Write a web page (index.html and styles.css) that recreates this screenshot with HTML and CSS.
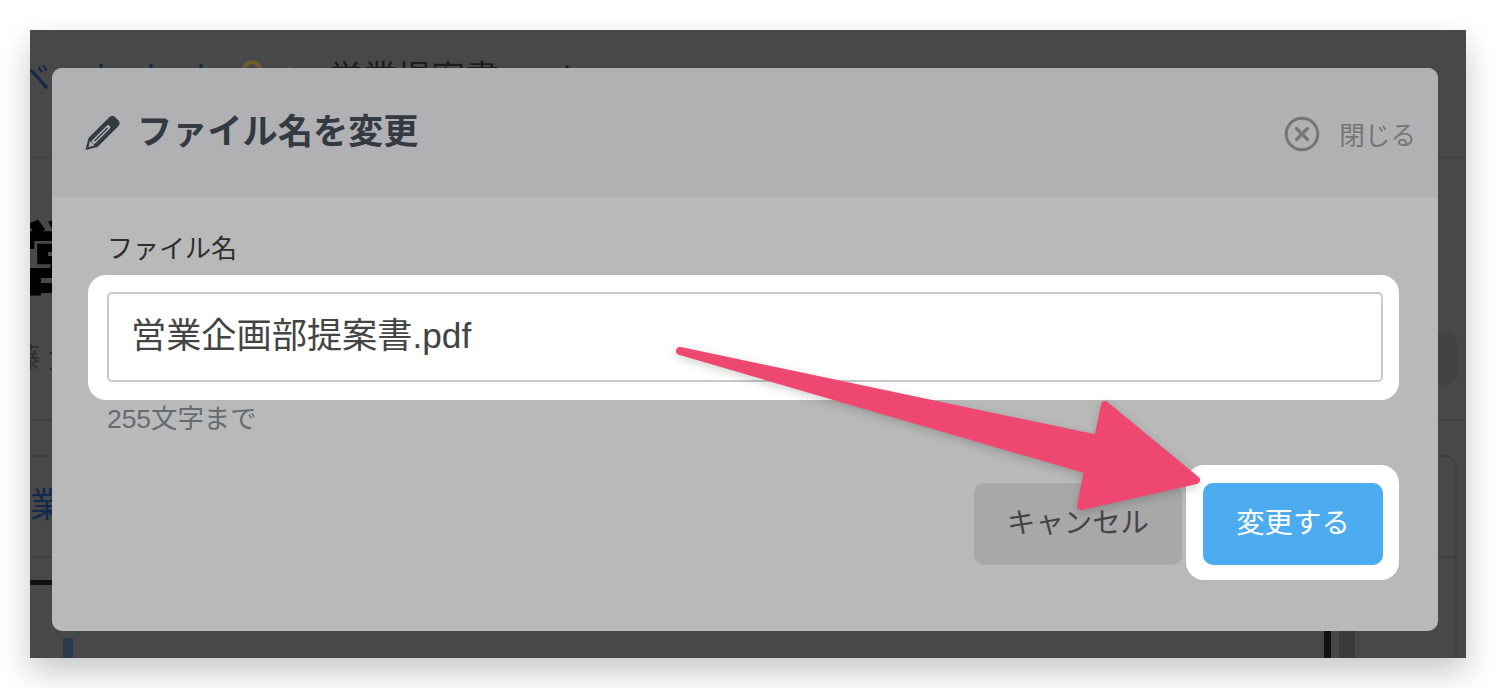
FILE: index.html
```html
<!DOCTYPE html>
<html lang="ja">
<head>
  <meta charset="UTF-8" />
  <meta name="viewport" content="width=device-width, initial-scale=1.0" />
  <title>ファイル名を変更</title>
  <link rel="stylesheet" href="styles.css">
</head>
<body>
  <div class="window">
    <!-- dimmed page behind the modal -->
    <div class="page">
      <div class="crumbs">
        <span class="crumb-link first">ベ</span>
        <span class="crumb-link">ト</span>
        <span class="crumb-link">ト</span>
        <span class="crumb-link">ト</span>
        <svg class="key" width="24" height="24" viewBox="0 0 24 24"><circle cx="12" cy="12" r="8" fill="none" stroke="#6f5d2c" stroke-width="4"/></svg>
        <svg class="chev" width="20" height="24" viewBox="0 0 20 24"><path d="M3 2l14 12" fill="none" stroke="#6b6b6b" stroke-width="3"/></svg>
        <span class="crumb-file">営業提案書</span>
        <span class="crumb-mark">〆</span>
      </div>
      <h1 class="page-title">営</h1>
      <div class="meta-row">
        <span class="meta-text">藤 大</span>
        <div class="meta-btn"></div>
      </div>
      <div class="card">
        <div class="card-head">業</div>
        <div class="card-body">
          <div class="thick-bar"></div>
          <div class="columns">
            <div class="blue-block"></div>
            <div class="black-line"></div>
            <div class="gray-block"></div>
          </div>
        </div>
      </div>
    </div>

    <div class="modal">
      <div class="modal-head">
        <h2 class="modal-title">
          <svg class="pencil" width="38" height="38" viewBox="0 0 38 38">
            <path d="M1.5 37l3-12L25 4.500q3-3 6-.5l3.500 3.500q2.500 3-.5 6L13.500 34z" fill="#343a42"/>
            <path d="M10 28.500L24 14.500" stroke="#b1b1b3" stroke-width="4.500" stroke-linecap="round"/>
            <path d="M10.500 28L23.500 15" stroke="#343a42" stroke-width="1.500"/>
            <path d="M4.500 34l1.500-6 4.500 4.500z" fill="#b1b1b3"/>
          </svg>
          ファイル名を変更
        </h2>
        <div class="close">
          <svg width="36" height="36" viewBox="0 0 36 36">
            <circle cx="18" cy="18" r="15.800" fill="none" stroke="#757575" stroke-width="3"/>
            <path d="M12.500 12.500l11 11M23.500 12.500l-11 11" stroke="#757575" stroke-width="3.200" stroke-linecap="round"/>
          </svg>
          <span>閉じる</span>
        </div>
      </div>
      <div class="modal-body">
        <label class="field-label">ファイル名</label>
        <div class="spot spot-input">
          <div class="text-input">営業企画部提案書.pdf</div>
        </div>
        <p class="hint">255文字まで</p>
        <div class="actions">
          <button class="btn btn-cancel">キャンセル</button>
          <div class="spot spot-btn">
            <button class="btn btn-primary">変更する</button>
          </div>
        </div>
      </div>
    </div>

    <!-- annotation arrow drawn on top of the screenshot -->
    <svg class="arrow" width="1436" height="628" viewBox="30 30 1436 628">
      <path d="M680 351L1098 439L1105 405L1196 480L1081 506L1088 470Z" fill="#ee4770" stroke="#ee4770" stroke-width="8" stroke-linejoin="round"/>
    </svg>
  </div>
</body>
</html>
```

FILE: styles.css
```css
* {
  box-sizing: border-box;
}
body {
  margin: 0;
  height: 688px;
  overflow: hidden;
  padding: 30px;
  background: #fff;
  font-family: "Liberation Sans", "Noto Sans CJK JP", sans-serif;
}
.window {
  position: relative;
  height: 628px;
  overflow: hidden;
  background: #484848;
  box-shadow: 0 14px 30px rgba(0, 0, 0, 0.22);
}

/* page behind the modal */
.crumbs {
  display: flex;
  align-items: flex-start;
  height: 129px;
  padding-top: 26px;
  border-bottom: 2px solid #424242;
  font-size: 34px;
  line-height: 44px;
  white-space: nowrap;
}
.crumb-link {
  width: 50px;
  color: #12294a;
}
.crumb-link.first {
  width: 72px;
  margin-left: -14px;
}
.key {
  margin: 2px 0 0 2px;
}
.chev {
  margin: 10px 0 0 21px;
}
.crumb-file {
  margin-left: 24px;
  color: #1c1c1c;
}
.crumb-mark {
  margin-left: 44px;
  color: #1c1c1c;
  font-size: 30px;
}
.page-title {
  margin: 65px 0 0 -12px;
  color: #000;
  font-size: 80px;
  line-height: 72px;
  font-weight: 900;
}
.meta-row {
  display: flex;
  justify-content: space-between;
  height: 88px;
  margin-top: 37px;
  padding-right: 9px;
  border-bottom: 2px solid #424242;
}
.meta-text {
  margin-left: -18px;
  color: #2e2e2e;
  font-size: 28px;
  line-height: 52px;
}
.meta-btn {
  width: 60px;
  height: 52px;
  border-radius: 10px;
  background: #424242;
}
.card {
  height: 220px;
  margin: 34px 9px 0 -20px;
  border: 2px solid #404040;
  border-radius: 12px;
}
.card-head {
  height: 101px;
  padding: 26px 0 0 18px;
  border-bottom: 2px solid #404040;
  color: #12294a;
  font-size: 34px;
  line-height: 44px;
}
.card-body {
  padding-top: 22px;
}
.thick-bar {
  width: 1400px;
  height: 5px;
  background: #111;
}
.columns {
  display: flex;
  margin-top: 53px;
}
.blue-block {
  width: 10px;
  height: 30px;
  margin-left: 51px;
  background: #2a3b4b;
}
.black-line {
  width: 7px;
  height: 30px;
  margin: -10px 0 0 1251px;
  background: #111;
}
.gray-block {
  width: 16px;
  height: 30px;
  margin: -10px 0 0 8px;
  background: #3a3a3a;
}

/* modal */
.modal {
  position: absolute;
  top: 38px;
  left: 22px;
  width: 1386px;
  height: 563px;
  overflow: hidden;
  border-radius: 10px;
  background: #b9b9b9;
}
.modal-head {
  display: flex;
  align-items: center;
  justify-content: space-between;
  height: 129px;
  padding: 0 22px 0 32px;
  background: #b1b1b3;
}
.modal-title {
  display: flex;
  align-items: center;
  gap: 15px;
  margin: 0 0 1px;
  color: #343a42;
  font-size: 35.200px;
  line-height: 44px;
  font-weight: 700;
}
.close {
  display: flex;
  align-items: center;
  gap: 19px;
  margin-top: 2px;
  color: #757575;
  font-size: 25.600px;
}
.modal-body {
  padding: 37px 55px 0;
}
.field-label {
  display: block;
  color: #2f2f2f;
  font-size: 26px;
  line-height: 30px;
}
.spot {
  background: #fff;
  border-radius: 18px;
}
.spot-input {
  margin: 11px -16px 0 -19px;
  padding: 17px 16px 18px 19px;
}
.text-input {
  height: 90px;
  padding-left: 22px;
  border: 2px solid #c9c9c9;
  border-radius: 5px;
  color: #444;
  font-size: 35.200px;
  line-height: 84px;
}
.hint {
  margin: 4px 0 0;
  color: #666b71;
  font-size: 26.400px;
  line-height: 30px;
}
.actions {
  display: flex;
  align-items: flex-start;
  justify-content: flex-end;
  gap: 4px;
  margin: 31px -16px 0 0;
}
.btn {
  height: 82px;
  padding: 0 0 7px;
  border: 0;
  border-radius: 10px;
  font-family: inherit;
  font-size: 28.400px;
}
.btn-cancel {
  width: 208px;
  margin-top: 18px;
  background: #a8a8a8;
  color: #444;
}
.spot-btn {
  padding: 18px 16px 15px 17px;
}
.btn-primary {
  display: block;
  width: 180px;
  background: #4dabf0;
  color: #fff;
}
.arrow {
  position: absolute;
  top: 0;
  left: 0;
  filter: drop-shadow(0 3px 5px rgba(0, 0, 0, 0.18));
}
```
